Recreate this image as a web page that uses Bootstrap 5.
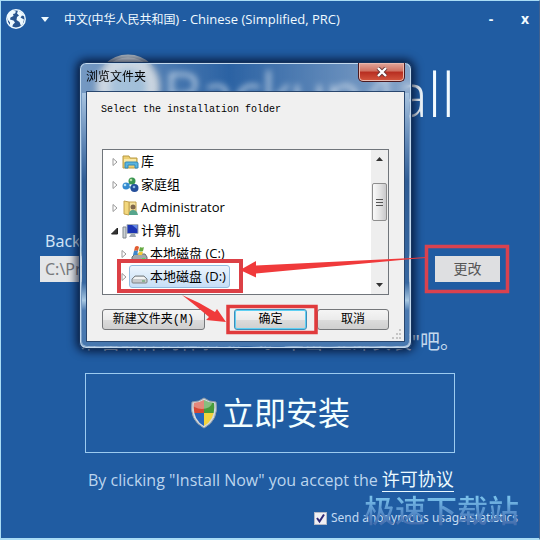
<!DOCTYPE html>
<html lang="zh-CN">
<head>
<meta charset="utf-8">
<meta name="viewport" content="width=device-width, initial-scale=1">
<title>Backup4all</title>
<link href="https://cdn.jsdelivr.net/npm/bootstrap@5.3.0/dist/css/bootstrap.min.css" rel="stylesheet">
<style>
body{background:#205ca2;font-family:"Noto Sans","Noto Sans CJK SC",sans-serif;color:#e3f4ff}
.installer{min-height:100vh;border:1px solid #a9dcf5;border-bottom-width:2px;border-right-color:#41618f;overflow:hidden}
.plain{background:none;border:0;padding:0;color:#f0faff}
.titlebar{height:36px;padding:0 10px 0 4px;font-size:12px}
.lang{font-size:12px;line-height:18px;margin-left:14px}
.lang>span{margin-left:15px}
.region{font-family:"Open Sans",sans-serif;font-size:13px}
.winbtn{width:20px;font:bold 14px/18px "Open Sans",sans-serif}
.brand{height:90px;padding:0 84px 0 93px;margin-top:14px}
.brandname{font:300 60px/86px "Open Sans",sans-serif;color:#f3fbff}
.folder{padding:0 39px;margin-top:90px}
.folder label{font-size:16px;line-height:20px;margin:0 0 5px 5px;color:#cfe2f5}
.path{height:26px;background:#e4e6e8;border:0;border-radius:0;padding:0 5px;font-size:16px;color:#77797c;min-width:0}
.change{width:65px;height:26px;background:#dedfe1;border:0;border-radius:0;padding:0;font-size:14px;line-height:26px;color:#555}
.ready{font-size:20px;line-height:28px;margin:46px 79px 0 84px;color:#c4d9ee;white-space:nowrap}
.install{margin:17px 84px 0;height:80px;border:1px solid #9ccbf0;border-radius:0;color:#f3ffff;font-size:32px;line-height:40px}
.install:hover{color:#fff;border-color:#fff}
.terms{margin:14px 84px 0;padding-left:3px;font-family:"Open Sans","Noto Sans CJK SC",sans-serif;font-size:16px;line-height:24px;color:#bcd5ee;white-space:nowrap}
.terms a{font-size:18px;color:#ecfaff;text-decoration:none;border-bottom:1px solid #ecfaff}
.stats{margin:17px 21px 0 0;font-size:12px;line-height:18px;color:#c3daf1}
.stats input{appearance:none;width:13px;height:13px;margin:0;border:1px solid #b5b9c6;background:#f0f0f4}
.stats input:checked{background:#f0f0f4 url("data:image/svg+xml,%3Csvg xmlns='http://www.w3.org/2000/svg' viewBox='0 0 11 11'%3E%3Cpath d='M2 5l2.5 3.5L9 1.5' fill='none' stroke='%23302a78' stroke-width='2'/%3E%3C/svg%3E")}
.watermark{right:20px;bottom:8px;font-size:31px;font-weight:500;line-height:40px;background:linear-gradient(#79bfe9 20%,#5b95cf 50%,#456fae 85%);-webkit-background-clip:text;background-clip:text;color:transparent;pointer-events:none}
.dialogwin{left:78px;top:61px;width:333px;padding:0 6px 6px;border:1px solid #16345e;border-radius:7px;box-shadow:inset 0 0 0 1px #c2d9ee,0 0 9px 3px rgba(0,10,35,.75);background:linear-gradient(90deg,rgba(190,205,222,.55),rgba(90,125,170,.2) 45%,rgba(205,215,228,.6));backdrop-filter:blur(3px);color:#000}
.dialogwin::before{content:"";position:absolute;inset:30px 2px 2px;border-radius:0 0 5px 5px;background:linear-gradient(#a8c4e0,#5f86b5 20%,#2f5c94 35%,#3767a0 75%,#a8c8e2 82%,#4b79b0 86%,#4777ae);z-index:-1}
.dialoghead{height:28px}
.dialoghead h1{font-size:12px;line-height:28px;font-weight:400;margin:0}
.closebtn{width:47px;height:19px;border:1px solid #4b1a20;border-top:0;border-radius:0 0 5px 5px;padding:0;background:linear-gradient(#e3a79b,#cf7060 45%,#b72d20 50%,#d4573f);box-shadow:inset 0 0 0 1px #eab8ae;line-height:0}
.dialogbody{background:#f0f0f0;border:1px solid #29476f;padding:9px 15px 11px;position:relative}
.prompt{font:10px/18px "Liberation Mono",monospace;margin:0 0 30px -1px}
.tree{height:146px;border:1px solid #70757b;background:#fff}
.tree ul{padding:0 0 0 8px}
.tree li{height:23px;font-family:"Open Sans","Noto Sans CJK SC",sans-serif;font-size:13px;line-height:23px;white-space:nowrap}
.tree .kid{padding-left:9px}
.node{gap:2px;display:flex;align-items:center}
.picked{border:1px solid #92bcdf;border-radius:3px;background:linear-gradient(#edf5fd,#c6def6);height:23px;margin-left:-2px;padding:0 3px 0 1px}
.scroller{width:17px;background:#eee;padding:5px 0}
.grip{width:15px;height:38px;margin-top:20px;border:1px solid #8e8e8e;border-radius:2px;background:linear-gradient(90deg,#fafafa,#e7e7e7 45%,#c9c9cb)}
.actions{margin-top:14px}
.win{height:21px;border:1px solid #75777a;border-radius:3px;background:linear-gradient(#f5f5f5,#ebebeb 50%,#dcdcdc 51%,#cfcfcf);padding:0;font-family:"Liberation Mono","Noto Sans CJK SC",monospace;font-size:12px;line-height:18px;color:#000;white-space:nowrap}
.w-new{width:103px}.w-ok{width:73px}.w-no{width:72px}
.primary{border-color:#3f8db9;box-shadow:inset 0 0 0 1px #5fd0f3;margin-left:29px}
.corner{right:1px;bottom:1px}
.notes{left:0;top:0;pointer-events:none}
</style>
<script src="https://cdn.jsdelivr.net/npm/bootstrap@5.3.0/dist/js/bootstrap.bundle.min.js"></script>
</head>
<body>
<main class="installer position-relative d-flex flex-column">
  <header class="titlebar d-flex align-items-center">
    <svg width="22" height="22" viewBox="0 0 22 22" aria-hidden="true"><circle cx="11" cy="11" r="9.2" fill="#28558f" stroke="#eefaff" stroke-width="1.5"/><path d="M2 9Q3 4 8 2.500l3 1-1 2-2 .5.500 2-3 1.500-.5 2 3.500 1 1.500 2-2 2-1 3-2-2v-3L3 12zM13 2.500l4 2 2.500 4-2.500-1-1.500 2 3.500 2-1 4-2 2.500-1.500-4-3-2 .5-3 2-1.500-2-2z" fill="#eefaff"/></svg>
    <button class="plain lang d-flex align-items-center" type="button"><svg width="8" height="5" aria-hidden="true"><path d="M0 0h8L4 5z" fill="#eefaff"/></svg><span>中文(中华人民共和国) <span class="region">- Chinese (Simplified, PRC)</span></span></button>
    <button class="plain winbtn ms-auto me-2" type="button" aria-label="最小化">-</button>
    <button class="plain winbtn text-end" type="button" aria-label="关闭">x</button>
  </header>
  <div class="brand d-flex align-items-start justify-content-between">
    <svg width="68" height="72" viewBox="0 0 68 72" aria-hidden="true"><circle cx="34" cy="36" r="31" fill="#e1e6ea" stroke="#b3bdc6" stroke-width="3"/><circle cx="34" cy="36" r="18" fill="#9bc0dd"/></svg>
    <div class="brandname">Backup4all</div>
  </div>
  <form class="folder">
    <label class="d-block" for="path">Backup4all installation folder:</label>
    <div class="d-flex">
      <input id="path" class="path flex-grow-1 me-4" type="text" value="C:\Program Files\Softland\Backup4all">
      <button class="change btn" type="button">更改</button>
    </div>
  </form>
  <p class="ready d-flex justify-content-end"><span>准备软件的体验3。3。单击"立即安装"吧。</span></p>
  <button class="install btn d-flex align-items-center justify-content-center gap-1" type="button">
    <svg width="28" height="32" viewBox="0 0 28 32" aria-hidden="true"><defs><clipPath id="sh"><path d="M14 3Q19 6 24 6Q26 22 14 29Q2 22 4 6Q9 6 14 3z"/></clipPath></defs><path d="M14 1Q19 5 26 5Q29 23 14 31Q-1 23 2 5Q9 5 14 1z" fill="#d3dade" stroke="#929ca7"/><g clip-path="url(#sh)"><path d="M0 0h14v16H0z" fill="#d64834"/><path d="M14 0h14v16H14z" fill="#479b3b"/><path d="M0 16h14v16H0z" fill="#2766bd"/><path d="M14 16h14v16H14z" fill="#f4d33d"/><ellipse cx="12" cy="6" rx="10" ry="6" fill="#fff" opacity=".35"/></g></svg>
    <span>立即安装</span>
  </button>
  <div class="terms">By clicking "Install Now" you accept the <a href="#license">许可协议</a></div>
  <div class="stats d-flex align-items-center justify-content-end"><input id="usage" type="checkbox" checked><label class="ms-1" for="usage">Send anonymous usage statistics</label></div>
  <div class="watermark position-absolute">极速下载站</div>

  <section class="dialogwin position-absolute" role="dialog" aria-labelledby="dlg">
    <div class="dialoghead d-flex align-items-start justify-content-between">
      <h1 id="dlg">浏览文件夹</h1>
      <button class="closebtn" type="button" aria-label="关闭"><svg width="12" height="10" viewBox="0 0 12 10"><path d="M2 1l8 8M10 1L2 9" stroke="#633" stroke-width="4"/><path d="M2 1l8 8M10 1L2 9" stroke="#fff" stroke-width="2.4"/></svg></button>
    </div>
    <div class="dialogbody">
      <p class="prompt">Select the installation folder</p>
      <div class="tree d-flex">
        <ul class="list-unstyled flex-grow-1 m-0">
          <li class="node"><svg width="9" height="10" viewBox="0 0 9 10"><path d="M2 1.500L6 5 2 8.500z" fill="#fff" stroke="#999"/></svg><svg width="17" height="16" viewBox="0 0 17 16"><path d="M1 2h6l1 2h7v10H1z" fill="#edcf72" stroke="#b89a43"/><path d="M2 5h12v3H2z" fill="#f9e9a8"/><path d="M3 14V9q0-1 1-1h10q2 0 2 1v5h-3v-3H6v3z" fill="#59b4df" stroke="#3288b9"/></svg><span>库</span></li>
          <li class="node"><svg width="9" height="10" viewBox="0 0 9 10"><path d="M2 1.500L6 5 2 8.500z" fill="#fff" stroke="#999"/></svg><svg width="17" height="16" viewBox="0 0 17 16"><path d="M4 9l6-4 3 7z" fill="none" stroke="#63a9c9" stroke-width="2"/><circle cx="4" cy="9" r="3.500" fill="#348ad0"/><circle cx="10" cy="4" r="3.500" fill="#3a9551"/><circle cx="12.500" cy="11" r="4" fill="#254f9b"/><circle cx="9" cy="3" r="1.300" fill="#b7dda4"/><circle cx="3" cy="8" r="1.300" fill="#b3e2f5"/><circle cx="12" cy="10" r="1.300" fill="#8bb6e3"/></svg><span>家庭组</span></li>
          <li class="node"><svg width="9" height="10" viewBox="0 0 9 10"><path d="M2 1.500L6 5 2 8.500z" fill="#fff" stroke="#999"/></svg><svg width="17" height="16" viewBox="0 0 17 16"><path d="M7 2h7v12H7z" fill="#f5e3a1" stroke="#c2a04e"/><path d="M2 1l5 1v13l-5-1z" fill="#f2d77d" stroke="#c2a04e"/><circle cx="11" cy="7" r="2.500" fill="#7e664d"/><path d="M7 15q0-5 4-5t5 5z" fill="#56a58c"/></svg><span>Administrator</span></li>
          <li class="node"><svg width="9" height="10" viewBox="0 0 9 10"><path d="M6.500 2v6H.500z" fill="#333" stroke="#222"/></svg><svg width="17" height="16" viewBox="0 0 17 16"><path d="M1 4h3v11H1z" fill="#ccd2d5" stroke="#83898e"/><path d="M5 1.500h11v9H5z" fill="#1c35b3" stroke="#a6afba"/><path d="M10 2h5v4z" fill="#6488e4"/><path d="M9 11h4l1 3H7z" fill="#9ba5ae"/></svg><span>计算机</span></li>
          <li class="node kid"><svg width="9" height="10" viewBox="0 0 9 10"><path d="M2 1.500L6 5 2 8.500z" fill="#fff" stroke="#999"/></svg><svg width="17" height="16" viewBox="0 0 17 16"><path d="M1 11l3-3h10l2 3v4H1z" fill="#a2a8ab" stroke="#666e74"/><path d="M4 1q2-2 4 0L7 5Q5 4 3 5z" fill="#e15d31"/><path d="M9 1q2 1 4 0l-1 4q-2 1-4 0z" fill="#66aa43"/><path d="M3 5q2-1 4 0L6 9H2z" fill="#3d87cc"/><path d="M8 5.500q2 1 4 0L11 9H7z" fill="#f3ca36"/><path d="M11 13h3" stroke="#52df67" stroke-width="2"/></svg><span>本地磁盘 (C:)</span></li>
          <li class="node kid"><svg width="9" height="10" viewBox="0 0 9 10"><path d="M2 1.500L6 5 2 8.500z" fill="#fff" stroke="#999"/></svg><span class="node picked"><svg width="17" height="16" viewBox="0 0 17 16"><path d="M1 10l3-3h9l3 3v3q0 1-1 1H2q-1 0-1-1z" fill="#c7cacc" stroke="#7c8286"/><path d="M2 10l2-2h9l2 2z" fill="#f3f4f4"/><path d="M11 12h3" stroke="#4e9e56"/></svg><span>本地磁盘 (D:)</span></span></li>
        </ul>
        <div class="scroller d-flex flex-column align-items-center">
          <svg width="7" height="8" viewBox="0 0 7 8"><path d="M0 6h7L3.500 2z" fill="#333"/></svg>
          <div class="grip d-flex align-items-center justify-content-center"><svg width="7" height="9"><path d="M0 1.500h7M0 4.500h7M0 7.500h7" stroke="#555"/></svg></div>
          <svg class="mt-auto" width="7" height="8" viewBox="0 0 7 8"><path d="M0 2h7L3.500 6z" fill="#333"/></svg>
        </div>
      </div>
      <div class="actions d-flex">
        <button class="win w-new" type="button">新建文件夹(M)</button>
        <button class="win w-ok primary" type="button">确定</button>
        <button class="win w-no ms-auto" type="button">取消</button>
      </div>
      <svg class="corner position-absolute" width="12" height="12" viewBox="0 0 12 12"><path d="M8 1h2v2H8zM5 5h2v2H5zM8 5h2v2H8zM1 9h2v2H1zM5 9h2v2H5zM8 9h2v2H8z" fill="#c5c5c5"/></svg>
    </div>
  </section>
</main>
<svg class="notes position-absolute" width="540" height="540" viewBox="0 0 540 540" aria-hidden="true">
  <g fill="none"><path d="M119 261h122v30H119z" stroke="#dc4046" stroke-width="4"/><path d="M228 306.500h88v26H228z" stroke="#e03a3c" stroke-width="3.500"/><path d="M426.500 246.500h81v45h-81z" stroke="#d9424f" stroke-width="3.500"/></g>
  <path d="M240 270l16-9v4.500L412 258l14-1v1l-14 1-156 14.500v4z" fill="#f03a3b"/>
  <path d="M182 295q17 7 33 17l2-3 9 13-20-2 3-3q-14-12-27-22z" fill="#f03a3b"/>
</svg>
</body>
</html>
